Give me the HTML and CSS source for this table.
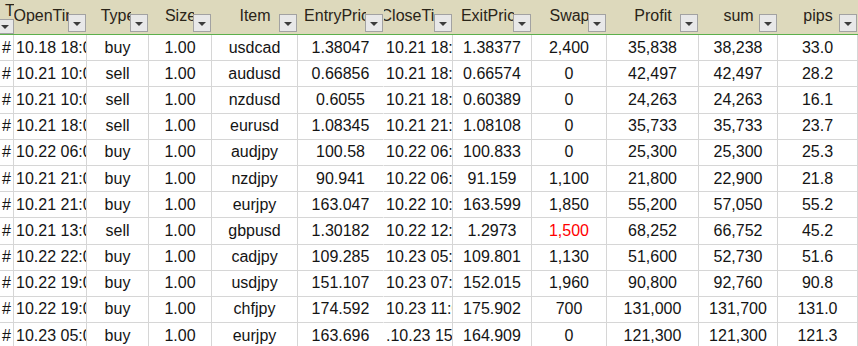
FILE: index.html
```html
<!DOCTYPE html>
<html lang="ja">
<head>
  <meta charset="UTF-8">
  <title>Trades</title>
  <link rel="stylesheet" href="styles.css">
</head>
<body>

  <table class="sheet">
    <colgroup>
      <col style="width: 14px"><col style="width: 73px"><col style="width: 62px"><col style="width: 63px">
      <col style="width: 86px"><col style="width: 86px"><col style="width: 69px"><col style="width: 79px">
      <col style="width: 75px"><col style="width: 92px"><col style="width: 79px"><col style="width: 80px">
    </colgroup>
    <thead>
      <tr>
        <th class="head-first"><span class="head-t">T</span><span class="filter-btn filter-first"></span></th>
        <th><div class="head-label">OpenTime</div><span class="filter-btn"></span></th>
        <th><div class="head-label">Type</div><span class="filter-btn"></span></th>
        <th><div class="head-label">Size</div><span class="filter-btn"></span></th>
        <th><div class="head-label">Item</div><span class="filter-btn"></span></th>
        <th><div class="head-label">EntryPrice</div><span class="filter-btn"></span></th>
        <th><div class="head-label">CloseTime</div><span class="filter-btn"></span></th>
        <th><div class="head-label">ExitPrice</div><span class="filter-btn"></span></th>
        <th><div class="head-label">Swap</div><span class="filter-btn"></span></th>
        <th><div class="head-label">Profit</div><span class="filter-btn"></span></th>
        <th><div class="head-label">sum</div><span class="filter-btn"></span></th>
        <th><div class="head-label">pips</div><span class="filter-btn"></span></th>
      </tr>
    </thead>
    <tbody>
      <tr><td class="left">#</td><td class="left">10.18 18:00</td><td>buy</td><td>1.00</td><td>usdcad</td><td class="no-line">1.38047</td><td class="left">10.21 18:00</td><td>1.38377</td><td>2,400</td><td>35,838</td><td>38,238</td><td>33.0</td></tr>
      <tr><td class="left">#</td><td class="left">10.21 10:00</td><td>sell</td><td>1.00</td><td>audusd</td><td class="no-line">0.66856</td><td class="left">10.21 18:00</td><td>0.66574</td><td>0</td><td>42,497</td><td>42,497</td><td>28.2</td></tr>
      <tr><td class="left">#</td><td class="left">10.21 10:00</td><td>sell</td><td>1.00</td><td>nzdusd</td><td class="no-line">0.6055</td><td class="left">10.21 18:00</td><td>0.60389</td><td>0</td><td>24,263</td><td>24,263</td><td>16.1</td></tr>
      <tr><td class="left">#</td><td class="left">10.21 18:00</td><td>sell</td><td>1.00</td><td>eurusd</td><td class="no-line">1.08345</td><td class="left">10.21 21:00</td><td>1.08108</td><td>0</td><td>35,733</td><td>35,733</td><td>23.7</td></tr>
      <tr><td class="left">#</td><td class="left">10.22 06:00</td><td>buy</td><td>1.00</td><td>audjpy</td><td class="no-line">100.58</td><td class="left">10.22 06:00</td><td>100.833</td><td>0</td><td>25,300</td><td>25,300</td><td>25.3</td></tr>
      <tr><td class="left">#</td><td class="left">10.21 21:00</td><td>buy</td><td>1.00</td><td>nzdjpy</td><td class="no-line">90.941</td><td class="left">10.22 06:00</td><td>91.159</td><td>1,100</td><td>21,800</td><td>22,900</td><td>21.8</td></tr>
      <tr><td class="left">#</td><td class="left">10.21 21:00</td><td>buy</td><td>1.00</td><td>eurjpy</td><td class="no-line">163.047</td><td class="left">10.22 10:00</td><td>163.599</td><td>1,850</td><td>55,200</td><td>57,050</td><td>55.2</td></tr>
      <tr><td class="left">#</td><td class="left">10.21 13:00</td><td>sell</td><td>1.00</td><td>gbpusd</td><td class="no-line">1.30182</td><td class="left">10.22 12:00</td><td>1.2973</td><td class="negative">1,500</td><td>68,252</td><td>66,752</td><td>45.2</td></tr>
      <tr><td class="left">#</td><td class="left">10.22 22:00</td><td>buy</td><td>1.00</td><td>cadjpy</td><td class="no-line">109.285</td><td class="left">10.23 05:00</td><td>109.801</td><td>1,130</td><td>51,600</td><td>52,730</td><td>51.6</td></tr>
      <tr><td class="left">#</td><td class="left">10.22 19:00</td><td>buy</td><td>1.00</td><td>usdjpy</td><td class="no-line">151.107</td><td class="left">10.23 07:00</td><td>152.015</td><td>1,960</td><td>90,800</td><td>92,760</td><td>90.8</td></tr>
      <tr><td class="left">#</td><td class="left">10.22 19:00</td><td>buy</td><td>1.00</td><td>chfjpy</td><td class="no-line">174.592</td><td class="left">10.23 11:00</td><td>175.902</td><td>700</td><td>131,000</td><td>131,700</td><td>131.0</td></tr>
      <tr><td class="left">#</td><td class="left">10.23 05:00</td><td>buy</td><td>1.00</td><td>eurjpy</td><td class="no-line">163.696</td><td class="left">.10.23 15:00</td><td>164.909</td><td>0</td><td>121,300</td><td>121,300</td><td>121.3</td></tr>
    </tbody>
  </table>

</body>
</html>
```

FILE: styles.css
```css
body {
  margin: 0;
  background: #fff;
  font-family: 'Liberation Sans', Arial, sans-serif;
  font-size: 16px;
  color: #141414;
}
.sheet {
  table-layout: fixed;
  width: 858px;
  border-collapse: separate;
  border-spacing: 0;
}
.sheet thead tr {
  height: 35px;
}
.sheet th {
  position: relative;
  padding: 0;
  background-color: #ddd9bc;
  border-bottom: 1px solid #5cb04c;
  font-weight: normal;
  color: #2a2418;
  overflow: hidden;
}
.head-label {
  display: flex;
  justify-content: center;
  white-space: nowrap;
  overflow: hidden;
  line-height: 20px;
  padding-bottom: 2px;
  clip-path: inset(0 18px 0 0);
}
.head-first {
  text-align: left;
  vertical-align: top;
}
.head-t {
  display: block;
  padding: 2px 0 0 5px;
  line-height: 17px;
}
.filter-btn {
  position: absolute;
  right: 1px;
  bottom: 2px;
  width: 16px;
  height: 16px;
  background-color: #e8e8e8;
  border: 1px solid #a2a2a2;
}
.filter-btn::after {
  content: '';
  position: absolute;
  left: 4px;
  top: 7px;
  border-left: 4px solid transparent;
  border-right: 4px solid transparent;
  border-top: 4px solid #3c3c3c;
}
.filter-first {
  right: auto;
  left: -4px;
  bottom: 0;
  height: 13px;
}
.filter-first::after {
  top: 5px;
}
.sheet tbody tr {
  height: 26.2px;
}
.sheet td {
  padding: 0 1px;
  text-align: center;
  white-space: nowrap;
  overflow: hidden;
  border-right: 1px solid #d6d6d6;
  border-bottom: 1px solid #d6d6d6;
}
.sheet td.left {
  text-align: left;
  padding-left: 2px;
}
.sheet td.no-line {
  border-right-color: transparent;
}
.negative {
  color: #ff0000;
}
```
